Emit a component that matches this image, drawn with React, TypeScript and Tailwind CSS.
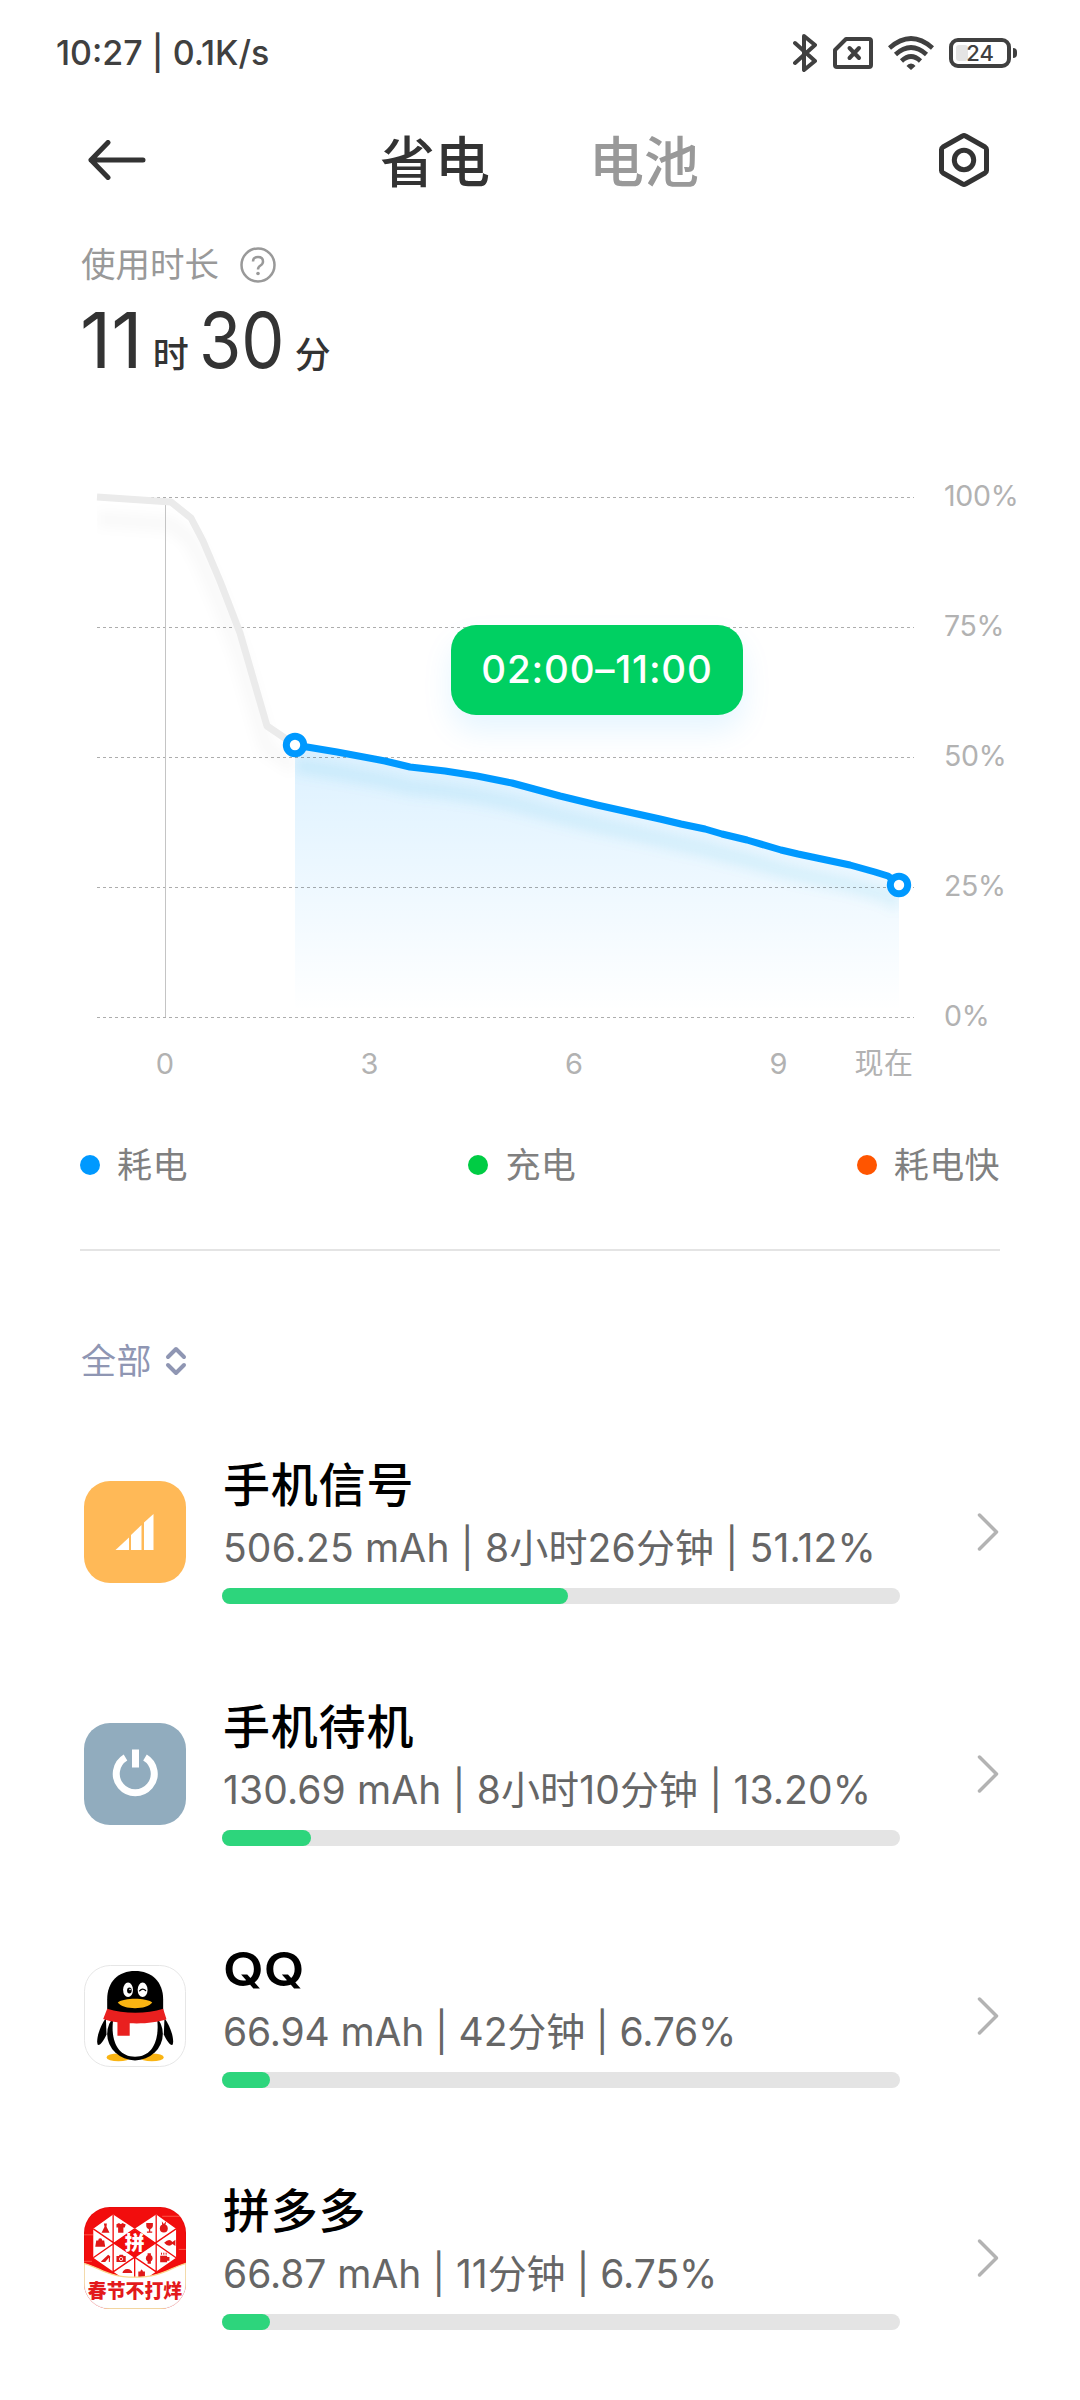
import React from "react";

const GRID_ROWS = [0, 130, 260, 390, 520];
const PERCENTS = ["100%", "75%", "50%", "25%", "0%"];
const HOURS = ["0", "3", "6", "9"];

const idlePoints = "0,0 74,5 94,21 106,44 123,84 143,136 170,229";
const usedPoints =
  "198,248 240,255 288,264 313,270 348,274 380,279 415,286 463,299 500,308 563,322 584,327 608,332 625,337 650,343 684,353 701,357 753,368 778,375 791,379 802,387";

const legend = [
  { label: "耗电", dot: "bg-[#0099ff]" },
  { label: "充电", dot: "bg-[#00cc44]" },
  { label: "耗电快", dot: "bg-[#ff5500]" },
];

function SignalIcon() {
  return (
    <svg viewBox="0 0 102 102" className="size-full">
      <rect width="102" height="102" rx="26" fill="#ffb957" />
      <path d="M31.5 69 45 56.5V69Z" fill="#fff" />
      <path d="M47 54 57.5 44V69H47Z" fill="#fff" />
      <path d="M60 41.5 69.5 33V69H60Z" fill="#fff" />
    </svg>
  );
}

function StandbyIcon() {
  return (
    <svg viewBox="0 0 102 102" className="size-full">
      <rect width="102" height="102" rx="26" fill="#91acbe" />
      <path
        d="M41.5 34.5A19 19 0 1 0 61 34.5"
        fill="none"
        stroke="#fff"
        strokeWidth="7"
      />
      <rect x="48" y="26.5" width="7" height="18" fill="#fff" />
    </svg>
  );
}

function QQIcon() {
  return (
    <svg viewBox="0 0 308 308" className="size-full">
      <rect x="1.5" y="1.5" width="305" height="305" rx="78" fill="#fff" stroke="#e6e6e6" strokeWidth="3" />
      <ellipse cx="104" cy="279" rx="36" ry="12" fill="#fab412" />
      <ellipse cx="205" cy="279" rx="36" ry="12" fill="#fab412" />
      {/* wings */}
      <path d="M66 160C48 185 36 222 41 240C46 246 58 232 68 210Z" fill="#000" />
      <path d="M243 160C261 185 273 222 268 240C263 246 251 232 241 210Z" fill="#000" />
      <ellipse cx="154" cy="208" rx="84" ry="80" fill="#000" />
      <path d="M70 150V104C70 50 104 18 154 18C204 18 239 50 239 104V150Z" fill="#000" />
      <path d="M88 165H221C228 225 208 277 154 277C100 277 80 225 88 165Z" fill="#fff" />
      <ellipse cx="133" cy="75" rx="15" ry="22" fill="#fff" />
      <ellipse cx="177" cy="75" rx="15" ry="22" fill="#fff" />
      <ellipse cx="137" cy="77" rx="7" ry="9" fill="#000" />
      <circle cx="139" cy="74" r="2.5" fill="#fff" />
      <path d="M168 78Q177 68 186 77" fill="none" stroke="#000" strokeWidth="4" strokeLinecap="round" />
      <path d="M102 113C122 98 186 98 206 113C190 136 118 136 102 113Z" fill="#fab412" />
      {/* scarf */}
      <path d="M70 132C120 148 190 148 239 132L249 164C220 174 180 178 138 176V214H101V173C86 171 70 168 58 163Z" fill="#e9201f" />
    </svg>
  );
}

function PddIcon() {
  return (
    <svg viewBox="0 0 308 308" className="size-full">
      <defs>
        <clipPath id="pdd">
          <rect width="308" height="308" rx="78" />
        </clipPath>
      </defs>
      <g clipPath="url(#pdd)">
        <rect width="308" height="308" fill="#f20d0d" />
        <path d="M0 84H28M236 28H296M0 164H24M286 128H308" stroke="#ff7a66" strokeWidth="2" />
        <path d="M28 66 88 23 153 66 218 23 278 66V153L153 240 28 153Z" fill="#fff" />
        <path
          d="M88 23V205M218 23V205M153 153V240M28 66 218 196M278 66 88 196M28 153 153 66M278 153 153 66"
          stroke="#f20d0d"
          strokeWidth="4"
        />
        <path d="M90 109 153 68 216 109 153 152Z" fill="#f20d0d" />
        <g fill="#e01818">
          {/* dress, shirt, goblet, fruit */}
          <path d="M60 50H69L68 60 77 78H53L62 60Z" />
          <path d="M98 52 106 48Q111 54 116 48L126 53 123 62H119V78H103V62H98Z" />
          <path d="M188 48H208V58Q206 66 200 67V74H206V78H190V74H196V67Q189 66 188 58Z" />
          <circle cx="241" cy="65" r="12" />
          <path d="M235 43 241 51 248 43 246 54H236Z" />
          {/* handbag, fish */}
          <path d="M37 101H43Q43 94 49 94T55 101H61L64 120H34Z" />
          <path d="M242 108Q258 92 267 106L276 99V118L267 112Q256 124 242 108Z" />
          {/* heel, camera, watch, mug */}
          <path d="M52 164 73 144 79 149 78 166H75V153L64 166H52Z" />
          <path d="M98 148H105L108 144H117L120 148H126V166H98Z" />
          <circle cx="197" cy="155" r="10" />
          <path d="M192 140H202V171H192Z" />
          <path d="M230 147H251V151H258V162H251V167H230Z" />
          <path d="M234 138V144M241 138V144M248 138V144" stroke="#e01818" strokeWidth="3" />
          {/* umbrella, bag */}
          <path d="M116 199Q118 188 131 187Q144 188 146 199Z" />
          <path d="M164 195H170Q174 182 178 195H184V212H164Z" />
        </g>
        <circle cx="112" cy="157" r="5" fill="none" stroke="#fff" strokeWidth="2.5" />
        <path d="M0 170C50 184 72 212 153 212S258 184 308 170V308H0Z" fill="#fff" stroke="#fcd58c" strokeWidth="4" />
        <text x="153" y="131" textAnchor="middle" fontSize="60" fontWeight="900" fill="#fff" fontFamily="'Noto Sans CJK SC', sans-serif">
          拼
        </text>
        <text x="154" y="276" textAnchor="middle" fontSize="57" fontWeight="900" fill="#e3191b" fontFamily="'Noto Sans CJK SC', sans-serif">
          春节不打烊
        </text>
      </g>
      <rect x="1" y="1" width="306" height="306" rx="78" fill="none" stroke="#000" strokeOpacity="0.08" strokeWidth="2" />
    </svg>
  );
}

const apps = [
  { name: "手机信号", detail: "506.25 mAh | 8小时26分钟 | 51.12%", fill: 51, icon: <SignalIcon />, tracking: "tracking-[0.16px]" },
  { name: "手机待机", detail: "130.69 mAh | 8小时10分钟 | 13.20%", fill: 13.1, icon: <StandbyIcon />, tracking: "tracking-[0.12px]" },
  { name: "QQ", detail: "66.94 mAh | 42分钟 | 6.76%", fill: 7.1, icon: <QQIcon />, tracking: "tracking-[-0.15px]" },
  { name: "拼多多", detail: "66.87 mAh | 11分钟 | 6.75%", fill: 7.1, icon: <PddIcon />, tracking: "tracking-[-0.05px]" },
];

function StatusBar() {
  return (
    <div className="flex h-[106px] items-center pl-14 pr-[63px] text-[#404040]">
      <span className="-mt-px text-[34px] font-medium whitespace-pre">10:27 | 0.1K/s</span>
      <svg className="ml-auto" width="24" height="40" viewBox="0 0 24 40" fill="none" stroke="currentColor" strokeWidth="4" strokeLinejoin="round" strokeLinecap="round">
        <path d="M2 10 22 28 11 37V3L22 12 2 30" />
      </svg>
      <svg className="ml-4" width="40" height="32" viewBox="0 0 40 32" fill="none" stroke="currentColor" strokeWidth="4" strokeLinejoin="round" strokeLinecap="round">
        <path d="M13 2H36Q38 2 38 4V28Q38 30 36 30H4Q2 30 2 28V13Z" />
        <path d="M16.5 11 26 21M26 11 16.5 21" />
      </svg>
      <svg className="ml-[15px]" width="46" height="34" viewBox="0 0 46 34" fill="none" stroke="currentColor" strokeWidth="4.6">
        <path d="M1.5 12Q23-7 44.5 12" />
        <path d="M7.5 18.5Q23 4.5 38.5 18.5" />
        <path d="M13.5 25Q23 16 32.5 25" />
        <path d="M23 27.5Q26 27.5 27.5 30L23 34 18.5 30Q20 27.5 23 27.5Z" fill="currentColor" stroke="none" />
      </svg>
      <div className="relative ml-[15px] flex h-[30px] w-[62px] items-center justify-center rounded-[9px] border-4 border-current">
        <div className="absolute left-[3px] top-[3px] h-4 w-3 rounded-[3px] bg-[#e4e4e4]" />
        <span className="relative text-[22px] leading-none font-medium">24</span>
      </div>
      <div className="ml-0.5 h-[10px] w-1 rounded-r bg-[#404040]" />
    </div>
  );
}

function Header() {
  return (
    <div className="flex h-[108px] items-center pl-[88px] pr-[90px] text-[#333]">
      <svg width="58" height="40" viewBox="0 0 58 40" fill="none" stroke="currentColor" strokeWidth="5" strokeLinecap="round" strokeLinejoin="round">
        <path d="M3 20H55M20 2.5 3 20 20 37.5" />
      </svg>
      <h1 className="ml-[234px] pt-1 text-[55px] leading-none font-medium">省电</h1>
      <span className="ml-[99px] pt-1 text-[55px] leading-none font-medium text-[#999]">电池</span>
      <svg className="ml-auto" width="52" height="56" viewBox="0 0 52 56" fill="none" stroke="currentColor" strokeWidth="5" strokeLinejoin="round">
        <path d="M24.5 4Q26 3 27.5 4L47 15Q48.5 16 48.5 17.5V38.5Q48.5 40 47 41L27.5 52Q26 53 24.5 52L5 41Q3.5 40 3.5 38.5V17.5Q3.5 16 5 15Z" />
        <circle cx="26" cy="28" r="9.7" />
      </svg>
    </div>
  );
}

function Chart() {
  return (
    <div className="mt-[108px] pl-[97px]">
      <div className="relative flex">
        <svg width="817" height="540" viewBox="0 0 817 540" className="overflow-visible" fill="none">
          <defs>
            <linearGradient id="area" x1="0" y1="248" x2="0" y2="515" gradientUnits="userSpaceOnUse">
              <stop offset="0" stopColor="#0099ff" stopOpacity="0.14" />
              <stop offset="1" stopColor="#0099ff" stopOpacity="0" />
            </linearGradient>
            <filter id="soft" x="-20%" y="-50%" width="140%" height="200%">
              <feGaussianBlur stdDeviation="6" />
            </filter>
            <clipPath id="left">
              <rect x="0" y="-20" width="198" height="560" />
            </clipPath>
            <clipPath id="right">
              <rect x="198" y="200" width="604" height="330" />
            </clipPath>
          </defs>
          <g clipPath="url(#left)">
            <polyline points={`${idlePoints} 198,248`} transform="translate(0 22)" stroke="#000" strokeOpacity="0.022" strokeWidth="16" filter="url(#soft)" />
          </g>
          <polygon points={`${usedPoints} 802,520 198,520`} fill="url(#area)" />
          <g clipPath="url(#right)">
            <polyline points={usedPoints} transform="translate(0 20)" stroke="#1a9bd8" strokeOpacity="0.09" strokeWidth="16" filter="url(#soft)" />
          </g>
          {GRID_ROWS.map((y) => (
            <path key={y} d={`M0 ${y + 0.5}H817`} stroke="#000" strokeOpacity="0.32" strokeDasharray="3 3" />
          ))}
          <path d="M68.5 4V520" stroke="#c4c4c4" />
          <polyline points={`${idlePoints} 198,248`} stroke="#ebebeb" strokeWidth="7" strokeLinejoin="round" />
          <polyline points={usedPoints} stroke="#0099ff" strokeWidth="7" strokeLinejoin="round" />
          <circle cx="198" cy="248" r="8.7" fill="#fff" stroke="#0099ff" strokeWidth="7" />
          <circle cx="802" cy="388" r="8.7" fill="#fff" stroke="#0099ff" strokeWidth="7" />
        </svg>
        <div className="-mt-4 ml-[30px] flex h-[550px] flex-col justify-between text-[28.5px] leading-[30px] tracking-[-0.3px] text-[#b2b2b2]">
          {PERCENTS.map((p) => (
            <span key={p}>{p}</span>
          ))}
        </div>
        <div className="absolute left-[354px] top-32 flex h-[90px] w-[292px] items-center justify-center rounded-[25px] bg-[#00d062] text-[38.5px] font-medium tracking-[0.8px] text-white shadow-[0_16px_30px_rgba(0,153,255,0.1)]">
          02:00–11:00
        </div>
      </div>
      <div className="ml-12 mt-[9px] flex h-9 items-center text-[29px] text-[#b2b2b2]">
        <div className="flex gap-[164.5px]">
          {HOURS.map((h) => (
            <span key={h} className="w-10 text-center">
              {h}
            </span>
          ))}
        </div>
        <span className="ml-[56px] tracking-[0.5px]">现在</span>
      </div>
    </div>
  );
}

export default function App() {
  return (
    <div className="h-[2400px] w-[1080px] overflow-hidden bg-white font-['Inter','Noto_Sans_CJK_SC',sans-serif]">
      <StatusBar />
      <Header />

      <div className="mt-[31px] flex h-10 items-center pl-[81px] text-[#999]">
        <span className="text-[34.5px]">使用时长</span>
        <svg className="ml-[21px]" width="36" height="36" viewBox="0 0 36 36" fill="none" stroke="currentColor" strokeWidth="2.5">
          <circle cx="18" cy="18" r="16.5" />
          <path d="M13 14.5Q13 10 18 10T23 14.5Q23 17 20.5 18.5T18 22.5" />
          <circle cx="18" cy="26.5" r="1.8" fill="currentColor" stroke="none" />
        </svg>
      </div>
      <div className="flex h-[104px] items-baseline pl-20 pt-[3px] leading-[104px] text-[#333]">
        <span className="text-[77px]">11</span>
        <span className="ml-[10px] text-[36px] font-medium">时</span>
        <span className="ml-[10px] origin-left scale-x-[0.89] text-[77px]">30</span>
        <span className="text-[36px] font-medium">分</span>
      </div>

      <Chart />

      <div className="mx-20 mt-[61px] flex h-[44px] items-center justify-between text-[35px] text-[#808080]">
        {legend.map((item) => (
          <div key={item.label} className="flex items-center">
            <i className={`size-5 rounded-full ${item.dot}`} />
            <span className="ml-[17px] tracking-[0.4px]">{item.label}</span>
          </div>
        ))}
      </div>
      <div className="mx-20 mt-[62px] h-0.5 bg-[#e4e4e4]" />

      <div className="mt-[88px] flex h-[44px] items-center pl-[81px] text-[35px] tracking-[0.5px] text-[#8f96b3]">
        全部
        <svg className="ml-[13px]" width="22" height="30" viewBox="0 0 22 30" fill="none" stroke="currentColor" strokeWidth="4" strokeLinecap="round" strokeLinejoin="round">
          <path d="M3 11 11 3 19 11M3 19 11 27 19 19" />
        </svg>
      </div>

      <div className="mt-[50px]">
        {apps.map((app) => (
          <div key={app.name} className="flex h-[242px] pl-[84px] pr-20">
            <div className="mt-12 size-[102px]">{app.icon}</div>
            <div className="ml-9 w-[678px]">
              <h2
                className={`mt-[22px] pl-px text-[47px] leading-[60px] text-black ${
                  app.name === "QQ" ? "origin-left scale-x-[1.12] font-semibold" : "font-medium tracking-[0.8px]"
                }`}>
                {app.name}
              </h2>
              <p className={`mt-[6px] pl-px text-[39px] leading-[54px] whitespace-nowrap text-[#666] ${app.tracking}`}>{app.detail}</p>
              <div className="mt-[13px] h-4 rounded-full bg-[#e4e4e4]">
                <div className="h-full rounded-full bg-[#2dd57c]" style={{ width: `${app.fill}%` }} />
              </div>
            </div>
            <svg className="ml-auto mt-[79px]" width="24" height="40" viewBox="0 0 24 40" fill="none" stroke="#b3b3b3" strokeWidth="3.5" strokeLinecap="round" strokeLinejoin="round">
              <path d="M3.5 3 20.5 20 3.5 37" />
            </svg>
          </div>
        ))}
      </div>
    </div>
  );
}
